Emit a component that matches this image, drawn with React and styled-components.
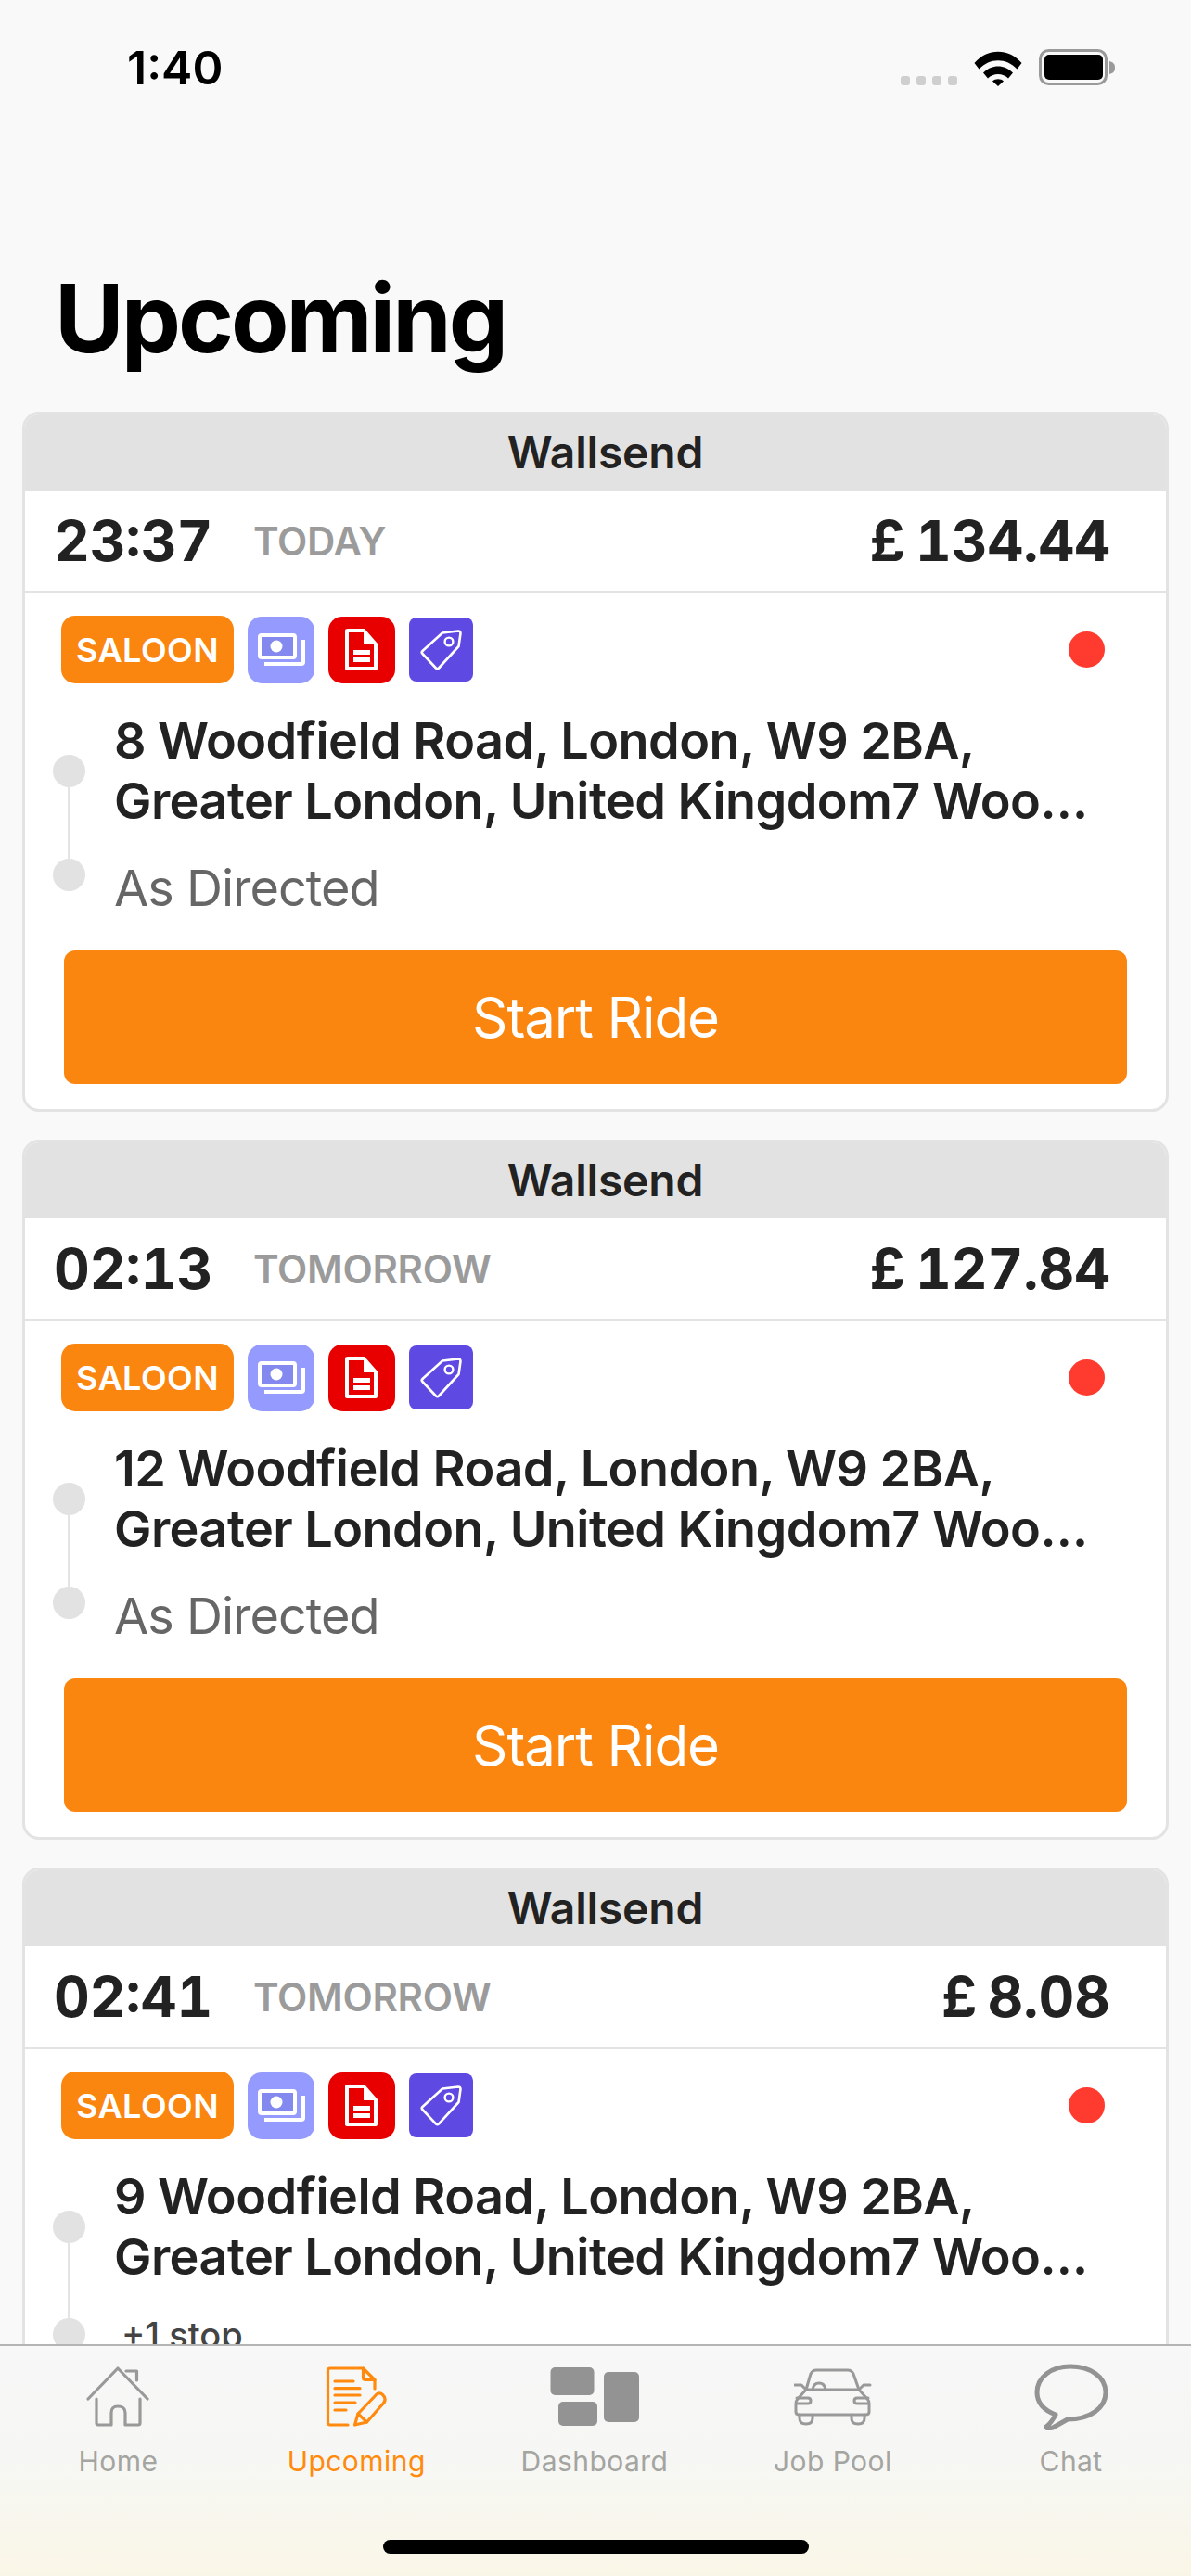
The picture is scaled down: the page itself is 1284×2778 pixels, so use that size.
import React from "react";
import styled, { createGlobalStyle } from "styled-components";

const Global = createGlobalStyle`
  html, body { margin: 0; padding: 0; background: #f9f9f9; }
  body { width: 1284px; height: 2778px; overflow: hidden; font-family: Inter, "Liberation Sans", sans-serif; }
  * { box-sizing: border-box; }
`;

const Screen = styled.div`
  position: relative;
  width: 1284px;
  height: 2778px;
  overflow: hidden;
  background: #f9f9f9;
`;

const StatusBar = styled.div`
  display: flex;
  justify-content: space-between;
  align-items: flex-start;
  height: 100px;
  padding: 42px 82px 0 137px;
`;

const Clock = styled.div`
  font-size: 50px;
  line-height: 62px;
  font-weight: 600;
  color: #000;
`;

const StatusIcons = styled.div`
  display: flex;
  align-items: flex-end;
  gap: 18px;
  padding-top: 11px;
`;

const SignalDots = styled.div`
  display: flex;
  gap: 7px;
  margin-bottom: 1px;
`;

const SignalDot = styled.span`
  width: 10px;
  height: 10px;
  border-radius: 3px;
  background: #cfcfcf;
`;

const Title = styled.h1`
  margin: 0;
  padding: 181px 0 0 59px;
  height: 344px;
  font-size: 102px;
  line-height: 124px;
  font-weight: 700;
  color: #000;
  letter-spacing: -3px;
`;

const List = styled.div`
  display: flex;
  flex-direction: column;
  gap: 30px;
  padding: 0 24px;
`;

const Card = styled.section`
  width: 1236px;
  height: 755px;
  flex: none;
  background: #fff;
  border: 3px solid #e3e3e3;
  border-radius: 18px;
  overflow: hidden;
`;

const Depot = styled.div`
  height: 82px;
  background: #e2e2e2;
  border-radius: 14px 14px 0 0;
  display: flex;
  align-items: center;
  justify-content: center;
  padding-left: 21px;
  padding-bottom: 2px;
  font-size: 48px;
  font-weight: 600;
  color: #222;
  letter-spacing: -0.2px;
`;

const TimeRow = styled.div`
  height: 111px;
  display: flex;
  align-items: center;
  padding: 0 60px 0 31px;
  border-bottom: 3px solid #e3e3e3;
`;

const Time = styled.div`
  width: 215px;
  font-size: 60px;
  font-weight: 700;
  color: #222;
  font-variant-numeric: tabular-nums;
`;

const Day = styled.div`
  flex: 1;
  font-size: 42px;
  font-weight: 600;
  color: #9b9b9b;
  letter-spacing: -0.3px;
`;

const Price = styled.div`
  font-size: 60px;
  font-weight: 700;
  color: #222;
  font-variant-numeric: tabular-nums;
  word-spacing: -5px;
`;

const Body = styled.div`
  padding: 24px 42px 27px;
`;

const Tags = styled.div`
  display: flex;
  align-items: center;
  height: 73px;
  margin-left: -3px;
  padding-right: 24px;
`;

const Chip = styled.div`
  width: 186px;
  height: 73px;
  border-radius: 15px;
  background: #fb860f;
  color: #fff;
  display: flex;
  align-items: center;
  justify-content: center;
  font-size: 36px;
  font-weight: 600;
  letter-spacing: 0.5px;
  margin-right: 15px;
`;

const Badge = styled.div`
  width: ${(p) => p.$size}px;
  height: ${(p) => p.$size}px;
  border-radius: ${(p) => p.$radius}px;
  background: ${(p) => p.$bg};
  margin-right: 15px;
  flex: none;
  svg { display: block; }
`;

const Alert = styled.div`
  width: 39px;
  height: 39px;
  border-radius: 50%;
  background: #ff3b30;
  margin-left: auto;
`;

const Route = styled.div`
  display: flex;
  margin-top: 29px;
  margin-left: -12px;
`;

const Timeline = styled.div`
  width: 35px;
  flex: none;
  margin-top: 48px;
  display: flex;
  flex-direction: column;
  align-items: center;
`;

const Node = styled.span`
  width: 35px;
  height: 35px;
  border-radius: 50%;
  background: #e2e2e2;
  flex: none;
`;

const Connector = styled.span`
  width: 3px;
  height: ${(p) => p.$h}px;
  background: #e4e4e4;
  flex: none;
`;

const Stops = styled.div`
  margin-left: 31px;
  width: 1053px;
`;

const AddressLine = styled.div`
  font-size: 54px;
  line-height: 65px;
  font-weight: 600;
  color: #222;
  letter-spacing: -0.55px;
  white-space: nowrap;
  overflow: hidden;
  text-overflow: ellipsis;
`;

const ExtraStop = styled.div`
  margin-top: 29px;
  margin-left: 8px;
  font-size: 38px;
  line-height: 46px;
  font-weight: 500;
  color: #444;
`;

const Destination = styled.div`
  margin-top: 29px;
  font-size: 54px;
  line-height: 65px;
  font-weight: 400;
  color: #666;
  letter-spacing: -1px;
`;

const StartButton = styled.button`
  display: block;
  width: 100%;
  height: 144px;
  margin: 35px 0 0;
  padding: 0;
  border: 0;
  border-radius: 12px;
  background: #fb860f;
  color: #fff;
  font-family: inherit;
  font-size: 60px;
  font-weight: 400;
  letter-spacing: -1.1px;
`;

const TabBar = styled.nav`
  position: absolute;
  left: 0;
  right: 0;
  bottom: 0;
  height: 250px;
  padding-top: 19px;
  border-top: 2px solid #b4b4b4;
  background: linear-gradient(180deg, #f7f7f7 0%, #f6f7f4 50%, #faf6e7 100%);
  display: grid;
  grid-template-columns: repeat(5, 1fr);
  align-items: start;
`;

const Tab = styled.div`
  display: flex;
  flex-direction: column;
  align-items: center;
  color: ${(p) => (p.$active ? "#ff8a0d" : "#a4a4a1")};
  margin-left: -2px;
`;

const TabIcon = styled.div`
  height: 72px;
  display: flex;
  align-items: center;
  justify-content: center;
  svg { display: block; }
`;

const TabLabel = styled.div`
  margin-top: 15px;
  font-size: 30px;
  line-height: 36px;
  font-weight: 400;
  letter-spacing: 0.45px;
`;

const HomeIndicator = styled.div`
  position: absolute;
  left: 413px;
  bottom: 24px;
  width: 459px;
  height: 15px;
  border-radius: 8px;
  background: #000;
`;

const Wifi = () => (
  <svg width="52" height="38" viewBox="0 0 52 38">
    <path d="M0.5 13 C14 -3.5 38 -3.5 51.5 13 L46.5 19.5 C35 7 17 7 5.5 19.5 Z" fill="#000" />
    <path d="M10 23.5 C19 14 33 14 42 23.5 L37 29.5 C31.5 23.5 20.5 23.5 15 29.5 Z" fill="#000" />
    <path d="M20 32.5 C23 29.6 29 29.6 32 32.5 L26 38 Z" fill="#000" />
  </svg>
);

const Battery = () => (
  <svg width="82" height="40" viewBox="0 0 82 40">
    <rect x="1.5" y="1.5" width="71" height="36" rx="9" fill="none" stroke="#9a9a9a" strokeWidth="3" />
    <rect x="6" y="6" width="63" height="27" rx="5" fill="#000" />
    <path d="M76 13 C80 14 82 16 82 20 C82 24 80 26 76 27 Z" fill="#9a9a9a" />
  </svg>
);

const MoneyIcon = () => (
  <svg width="72" height="72" viewBox="0 0 72 72">
    <rect x="13" y="20" width="38" height="24" rx="2" fill="#8389ee" stroke="#fff" strokeWidth="4" />
    <circle cx="31" cy="32" r="6.5" fill="#fff" />
    <path d="M18 51 H58 Q60 51 60 49 V25" fill="none" stroke="#fff" strokeWidth="4" />
  </svg>
);

const DocIcon = () => (
  <svg width="72" height="72" viewBox="0 0 72 72">
    <path d="M21 13 H39 L53 29 V56 Q53 58 51 58 H21 Q18 58 18 56 V15 Q18 13 21 13 Z" fill="#fff" />
    <path d="M22 17 H38 V30 H49 V54 H22 Z" fill="#e80000" />
    <rect x="27" y="36" width="18" height="5" fill="#fff" />
    <rect x="27" y="44" width="18" height="5" fill="#fff" />
  </svg>
);

const TagIcon = () => (
  <svg width="69" height="69" viewBox="0 0 69 69">
    <path
      d="M36 16.5 L53 14.5 Q55.5 14.5 55.5 17 L53.5 31 L32 54.5 Q30.5 55.8 29 54.5 L14.5 39 Q13 37.5 14.5 36 Z"
      fill="none"
      stroke="#fff"
      strokeWidth="2.6"
      strokeLinejoin="round"
    />
    <circle cx="43" cy="26" r="4.4" fill="none" stroke="#fff" strokeWidth="2.4" />
  </svg>
);

const HomeGlyph = () => (
  <svg width="68" height="66" viewBox="0 0 68 66" fill="none" stroke="#999" strokeWidth="3.2" strokeLinecap="round" strokeLinejoin="round">
    <path d="M2 35 L34 2 L66 35" />
    <path d="M43 5 H54.5 V15" />
    <path d="M11 35 V61 Q11 63 13 63 H27 V50 Q27 43 34 43 Q42 43 42 50 V63 H56 Q58 63 58 61 V35" />
  </svg>
);

const UpcomingGlyph = () => (
  <svg width="68" height="68" viewBox="0 0 68 68" fill="none" stroke="#ff8a0d" strokeWidth="3.2" strokeLinecap="round" strokeLinejoin="round">
    <path d="M25 64 H6 Q3.5 64 3.5 61.5 V5.5 Q3.5 3 6 3 H41.5 L54 15.5 V25" />
    <path d="M41.5 3 V13 Q41.5 15.5 44 15.5 H54" />
    <path d="M11 17 H31 M11 24.7 H38 M11 32 H38 M11 40 H33 M11 48 H23" />
    <path d="M32.5 64 L36 52 L56 31 Q59.5 28.5 62.5 31.5 L64.5 34 Q66 38 63.5 40.5 L45.5 61 Z" />
    <path d="M36 52 L45.5 61" />
  </svg>
);

const DashboardGlyph = () => (
  <svg width="96" height="66" viewBox="0 0 96 66" fill="#939393">
    <rect x="0.5" y="1" width="47" height="30" rx="5" />
    <rect x="9" y="38" width="42" height="26" rx="5" />
    <rect x="58" y="6" width="38" height="54" rx="5" />
  </svg>
);

const CarGlyph = () => (
  <svg width="84" height="62" viewBox="0 0 84 62" fill="none" stroke="#999" strokeWidth="3" strokeLinecap="round" strokeLinejoin="round">
    <path d="M13 23 L18 6 Q20 2 24 2 H58 Q62 2 64 6 L70 23" />
    <path d="M13 23 H70" />
    <path d="M13 23 L4 33 Q2 35 2 38 V47 Q2 50 6 50 H77 Q81 50 81 47 V38 Q81 35 79 33 L70 23" />
    <path d="M1 18 H8 L13 23 M82 18 H75 L70 23" />
    <path d="M3 32 H15 Q18 32 18 35 Q18 38 15 38 H3" />
    <path d="M80 32 H68 Q65 32 65 35 Q65 38 68 38 H80" />
    <path d="M6 50 V54 Q6 60 13 60 Q20 60 20 54 V50" />
    <path d="M62 50 V54 Q62 60 69 60 Q76 60 76 54 V50" />
    <path d="M20 23 Q21 16 27 16 Q33 16 34 23" />
  </svg>
);

const ChatGlyph = () => (
  <svg width="80" height="72" viewBox="0 0 80 72" fill="none" stroke="#939393" strokeWidth="5" strokeLinecap="round" strokeLinejoin="round">
    <path d="M23 55 C10 50 3 42 3 31 C3 14 19 3 39 3 C60 3 77 14 77 31 C77 48 60 60 36 60 L20 69 Q13 71 13 68 Q19 63 23 55 Z" />
  </svg>
);

const secondLine = "Greater London, United Kingdom7 Woodfield Road, London";

const rides = [
  { time: "23:37", day: "TODAY", price: "£ 134.44", street: "8 Woodfield Road, London, W9 2BA," },
  { time: "02:13", day: "TOMORROW", price: "£ 127.84", street: "12 Woodfield Road, London, W9 2BA," },
  { time: "02:41", day: "TOMORROW", price: "£ 8.08", street: "9 Woodfield Road, London, W9 2BA,", stop: "+1 stop" },
];

const tabs = [
  { label: "Home", icon: <HomeGlyph /> },
  { label: "Upcoming", icon: <UpcomingGlyph />, active: true },
  { label: "Dashboard", icon: <DashboardGlyph /> },
  { label: "Job Pool", icon: <CarGlyph /> },
  { label: "Chat", icon: <ChatGlyph /> },
];

function RideCard({ ride }) {
  return (
    <Card>
      <Depot>Wallsend</Depot>
      <TimeRow>
        <Time>{ride.time}</Time>
        <Day>{ride.day}</Day>
        <Price>{ride.price}</Price>
      </TimeRow>
      <Body>
        <Tags>
          <Chip>SALOON</Chip>
          <Badge $size={72} $radius={15} $bg="#959afe"><MoneyIcon /></Badge>
          <Badge $size={72} $radius={15} $bg="#e80000"><DocIcon /></Badge>
          <Badge $size={69} $radius={8} $bg="#5e4ae3"><TagIcon /></Badge>
          <Alert />
        </Tags>
        <Route>
          <Timeline>
            <Node />
            <Connector $h={ride.stop ? 81 : 77} />
            <Node />
          </Timeline>
          <Stops>
            <AddressLine>{ride.street}</AddressLine>
            <AddressLine>{secondLine}</AddressLine>
            {ride.stop && <ExtraStop>{ride.stop}</ExtraStop>}
            {!ride.stop && <Destination>As Directed</Destination>}
          </Stops>
        </Route>
        {!ride.stop && <StartButton>Start Ride</StartButton>}
      </Body>
    </Card>
  );
}

export default function App() {
  return (
    <Screen>
      <Global />
      <StatusBar>
        <Clock>1:40</Clock>
        <StatusIcons>
          <SignalDots>
            <SignalDot /><SignalDot /><SignalDot /><SignalDot />
          </SignalDots>
          <Wifi />
          <Battery />
        </StatusIcons>
      </StatusBar>
      <Title>Upcoming</Title>
      <List>
        {rides.map((r) => (
          <RideCard key={r.time} ride={r} />
        ))}
      </List>
      <TabBar>
        {tabs.map((t) => (
          <Tab key={t.label} $active={t.active}>
            <TabIcon>{t.icon}</TabIcon>
            <TabLabel>{t.label}</TabLabel>
          </Tab>
        ))}
        <HomeIndicator />
      </TabBar>
    </Screen>
  );
}
